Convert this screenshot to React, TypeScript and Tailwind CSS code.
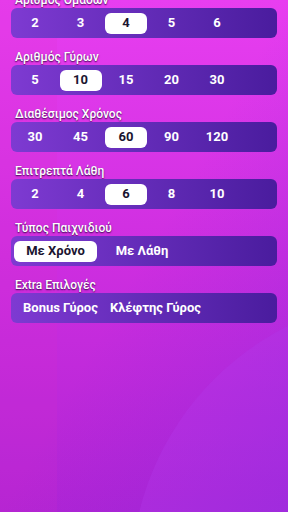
import { useState } from 'react';

const font = { fontFamily: 'Roboto, "Noto Sans", sans-serif' };

interface OptionRowProps {
    label: string;
    options: string[];
    selected: string;
    chipWidth?: string;
}

const OptionRow = ({ label, options, selected, chipWidth = 'w-[42px]' }: OptionRowProps) => {
    const [value, setValue] = useState(selected);
    return (
        <div className="flex flex-col">
            <div className="h-[16px] pl-[4px] text-[12px] leading-[16px] font-medium text-white [text-shadow:0_1px_1.5px_rgba(40,0,60,0.9)]">
                {label}
            </div>
            <div className="flex h-[30px] items-center gap-[3.5px] rounded-[6px] bg-gradient-to-r from-[#7e3ad2] to-[#4a1c9e] pl-[3px]">
                {options.map(opt => (
                    <button
                        key={opt}
                        onClick={() => setValue(opt)}
                        className={`flex h-[21px] ${chipWidth} items-center justify-center rounded-[6px] text-[13px] font-bold ${value === opt ? 'bg-white text-[#1b1530]' : 'text-white'}`}
                    >
                        {opt}
                    </button>
                ))}
            </div>
        </div>
    );
};

export default function App() {
    return (
        <div
            className="relative h-[512px] w-[288px] overflow-hidden bg-gradient-to-b from-[#e83ef0] via-[#ce2ee0] to-[#b024d4]"
            style={font}
        >
            {/* background decoration */}
            <div className="absolute left-0 top-0 h-full w-[57px] bg-[#e030c8]/15" />
            <div className="absolute left-[131px] top-[296px] h-[568px] w-[568px] rounded-full bg-[#c040f0]/30" />
            <div className="absolute inset-0 bg-gradient-to-br from-transparent via-transparent to-[#7a2ae0]/35" />

            <div className="relative mt-[-8px] flex flex-col gap-[11px] px-[11px]">
                <OptionRow label="Αριθμός Ομάδων" options={['2', '3', '4', '5', '6']} selected="4" />
                <OptionRow label="Αριθμός Γύρων" options={['5', '10', '15', '20', '30']} selected="10" />
                <OptionRow label="Διαθέσιμος Χρόνος" options={['30', '45', '60', '90', '120']} selected="60" />
                <OptionRow label="Επιτρεπτά Λάθη" options={['2', '4', '6', '8', '10']} selected="6" />
                <OptionRow label="Τύπος Παιχνιδιού" options={['Με Χρόνο', 'Με Λάθη']} selected="Με Χρόνο" chipWidth="w-[83px]" />

                <div className="flex flex-col">
                    <div className="h-[16px] pl-[4px] text-[12px] leading-[16px] font-medium text-white [text-shadow:0_1px_1.5px_rgba(40,0,60,0.9)]">
                        Extra Επιλογές
                    </div>
                    <div className="flex h-[30px] items-center rounded-[6px] bg-gradient-to-r from-[#7e3ad2] to-[#4a1c9e] pl-[6px]">
                        <button className="flex h-[21px] items-center px-[6px] text-[13px] font-bold text-white">Bonus Γύρος</button>
                        <button className="flex h-[21px] items-center px-[6px] text-[13px] font-bold text-white">Κλέφτης Γύρος</button>
                    </div>
                </div>
            </div>
        </div>
    );
}
